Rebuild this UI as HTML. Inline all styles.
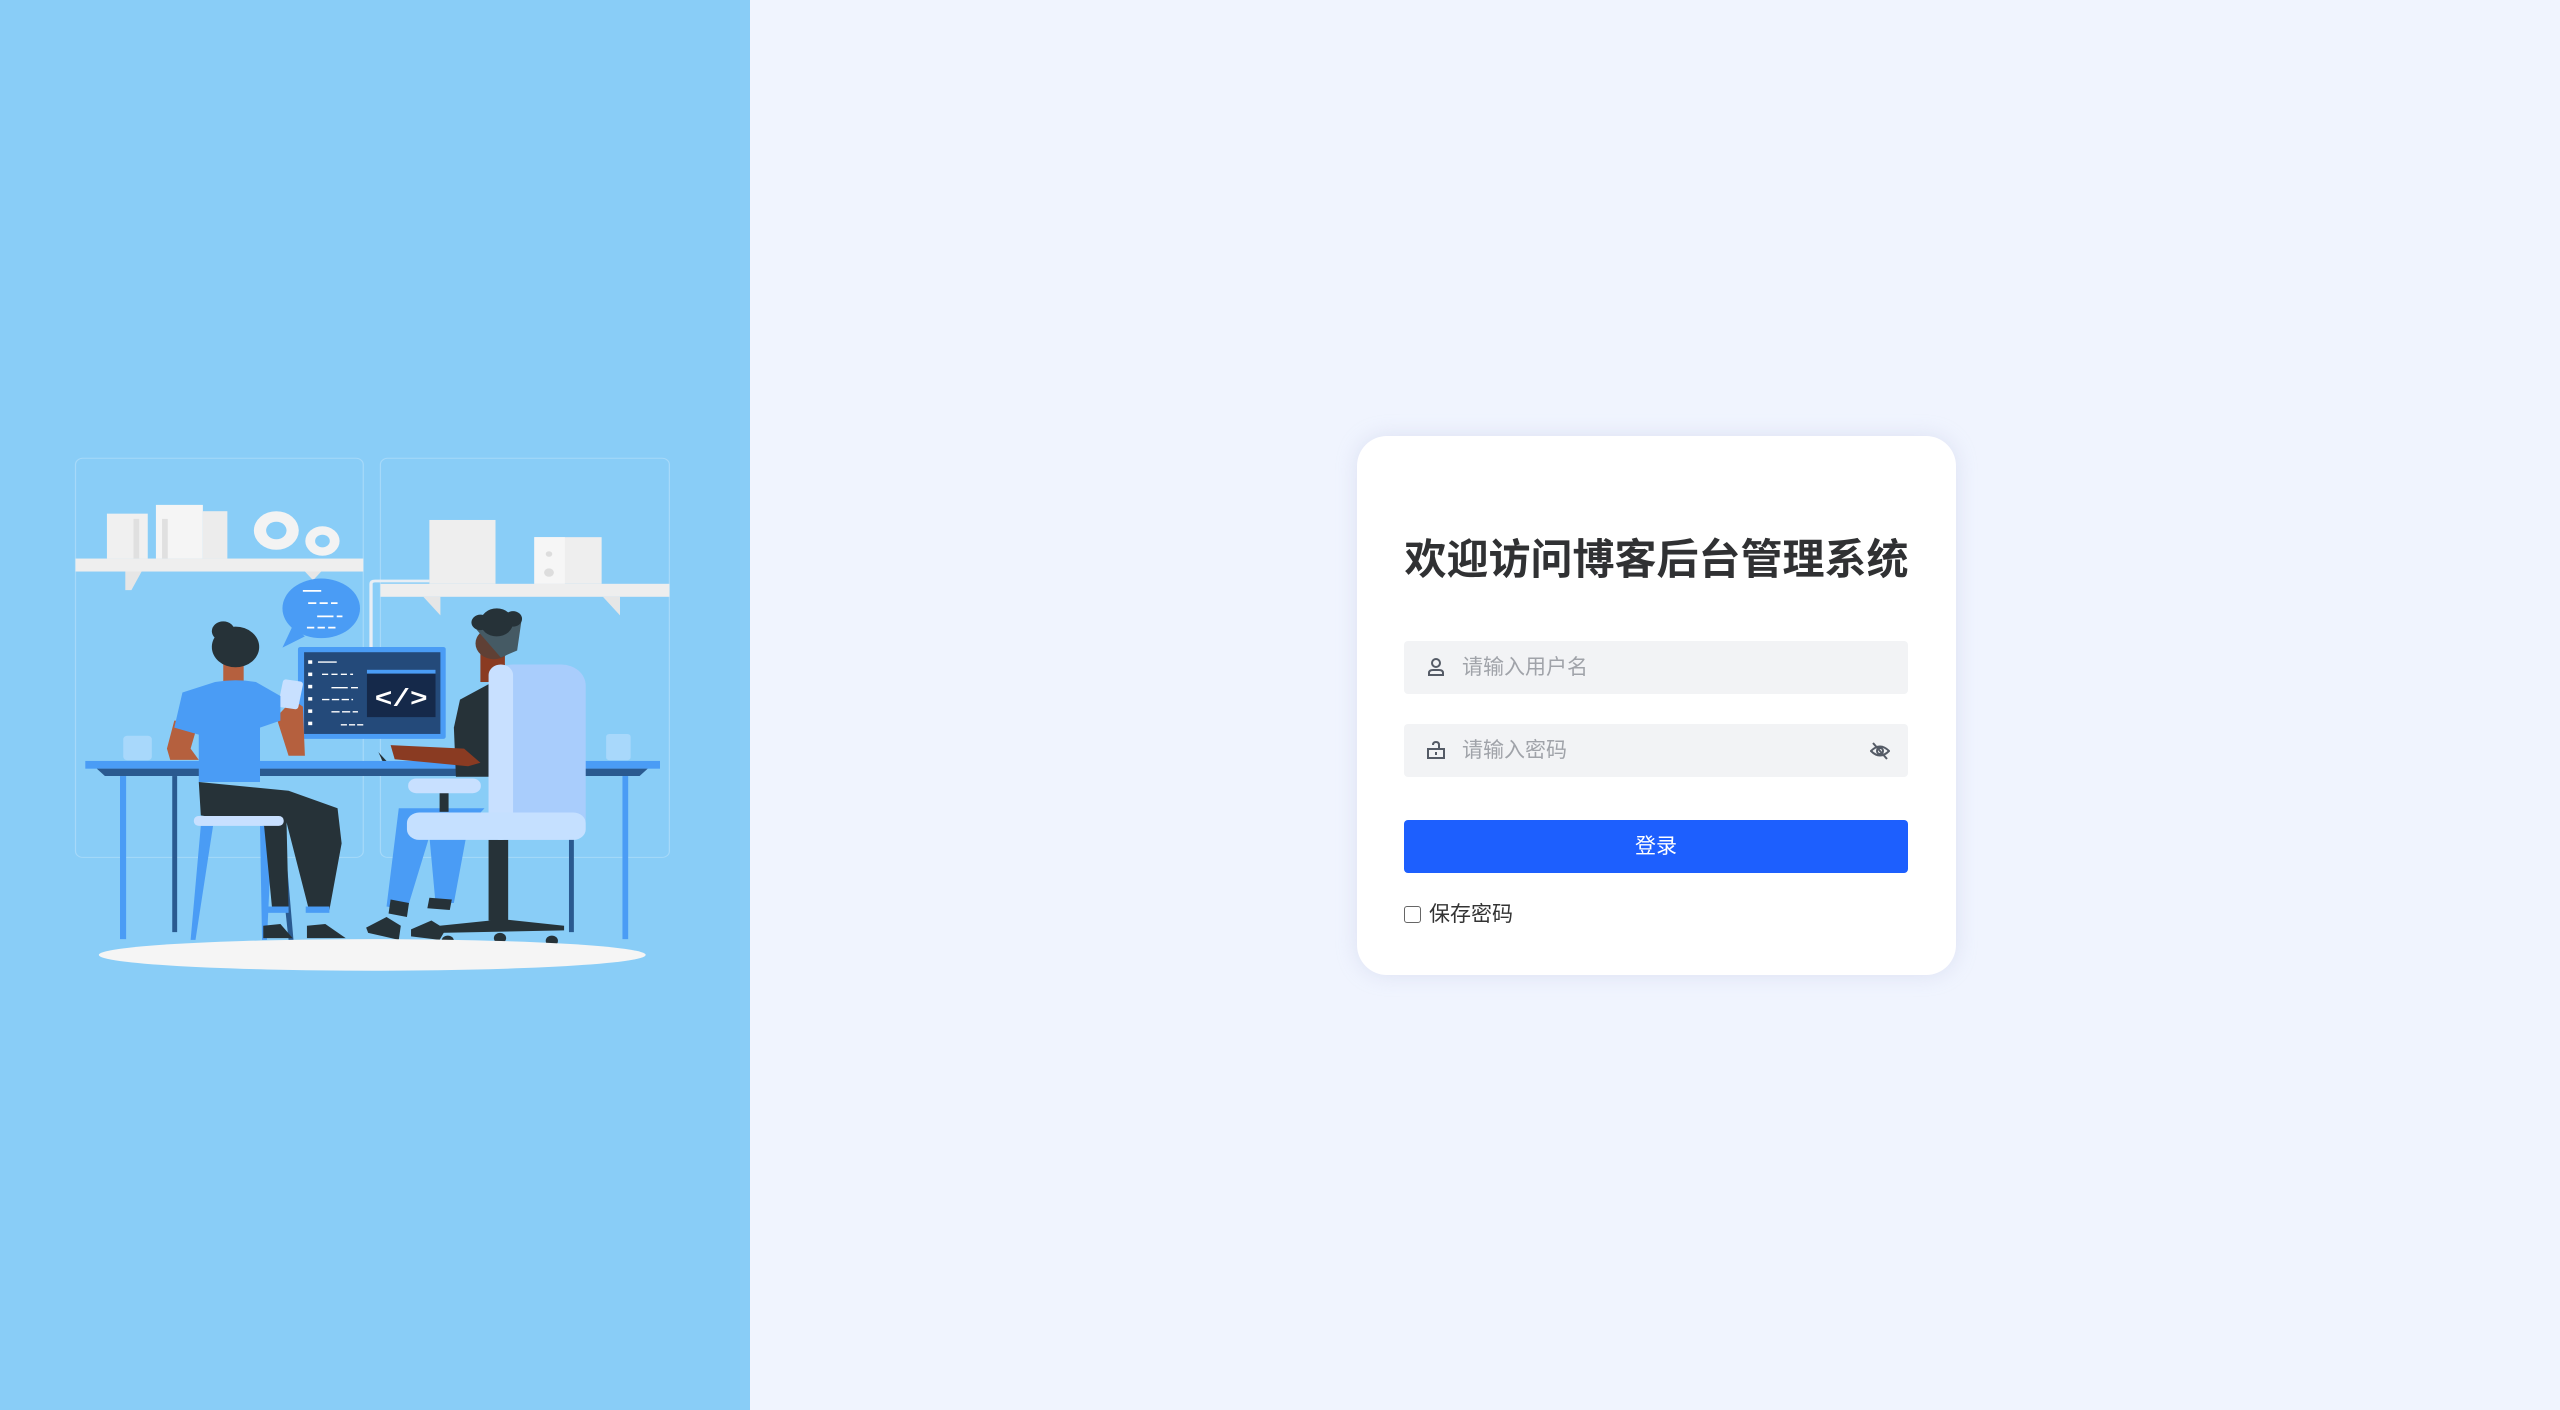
<!DOCTYPE html>
<html><head><meta charset="utf-8"><style>
*{margin:0;padding:0;box-sizing:border-box}
body{width:2560px;height:1410px;background:#f0f4fe;position:relative;overflow:hidden;font-family:"Liberation Sans","Noto Sans CJK SC",sans-serif}
#left{position:absolute;left:0;top:0;width:750px;height:1410px;background:#89cdf7}
#ill{position:absolute;left:60px;top:440px;width:640px;height:550px}
#card{position:absolute;left:1357px;top:436px;width:599px;height:539px;background:#fff;border-radius:30px;box-shadow:0 0 20px rgba(180,190,220,.35)}
h1{position:absolute;top:526px;text-align:center;font-size:42px;font-weight:bold;color:#303133;font-family:"Liberation Sans","Noto Sans CJK SC",sans-serif}
.inp{position:absolute;left:1404px;width:504px;height:53px;background:#f2f3f5;border-radius:4px}
.inp span{position:absolute;left:58px;top:13px;font-size:21px;color:#a0a3a9;line-height:27px}
.inp svg{position:absolute}
#btn{position:absolute;left:1404px;top:820px;width:504px;height:53px;background:#1d5ffe;border-radius:4px;color:#fff;font-size:21px;text-align:center;line-height:53px}
#cb{position:absolute;left:1404px;top:906px;width:17px;height:17px;border:1.5px solid #666;border-radius:3px;background:#fff}
#cbt{position:absolute;left:1429px;top:901px;font-size:21px;color:#333;line-height:27px}
</style></head><body>
<div id="left">
<svg id="ill" viewBox="0 0 1568 1568" preserveAspectRatio="none">
<rect x="38" y="52" width="705" height="1138" rx="18" fill="none" stroke="#a6d9f9" stroke-width="3"/>
<rect x="785" y="52" width="708" height="1138" rx="18" fill="none" stroke="#a6d9f9" stroke-width="3"/>
<rect x="115" y="210" width="100" height="128" fill="#f0f0f0"/>
<rect x="235" y="185" width="115" height="153" fill="#f5f5f5"/>
<rect x="350" y="203" width="60" height="135" fill="#ececec"/>
<rect x="180" y="225" width="14" height="113" fill="#e0e0e0"/>
<rect x="250" y="225" width="14" height="113" fill="#e0e0e0"/>
<circle cx="530" cy="258" r="55" fill="#f3f3f3"/><circle cx="530" cy="258" r="25" fill="#89cdf7"/>
<circle cx="643" cy="288" r="42" fill="#f3f3f3"/><circle cx="643" cy="288" r="18" fill="#89cdf7"/>
<rect x="38" y="338" width="705" height="37" fill="#eeeeee"/>
<polygon points="160,375 200,375 175,428 160,428" fill="#e6e6e6"/>
<polygon points="600,375 640,375 620,400" fill="#e6e6e6"/>
<path d="M762 590 V410 Q762 402 772 402 H905" fill="none" stroke="#e8eef5" stroke-width="8"/>
<rect x="905" y="228" width="162" height="182" fill="#eeeeee"/>
<rect x="1162" y="277" width="165" height="133" fill="#eeeeee"/>
<rect x="1162" y="277" width="75" height="133" fill="#f6f6f6"/>
<circle cx="1198" cy="325" r="8" fill="#ddd"/><circle cx="1198" cy="378" r="12" fill="#ddd"/>
<rect x="785" y="410" width="708" height="37" fill="#eeeeee"/>
<polygon points="890,447 932,447 932,500" fill="#e6e6e6"/>
<polygon points="1330,447 1372,447 1372,500" fill="#e6e6e6"/>
<ellipse cx="640" cy="480" rx="95" ry="85" fill="#4a9cf5"/>
<polygon points="570,530 600,560 545,592" fill="#4a9cf5"/>
<g stroke="#fff" stroke-width="5"><line x1="595" y1="430" x2="640" y2="430"/><line x1="608" y1="465" x2="680" y2="465" stroke-dasharray="20 8"/><line x1="630" y1="503" x2="692" y2="503" stroke-dasharray="40 8"/><line x1="605" y1="535" x2="680" y2="535" stroke-dasharray="18 8"/></g>
<rect x="155" y="843" width="70" height="70" rx="10" fill="#a8d8fb"/>
<rect x="1338" y="838" width="60" height="75" rx="8" fill="#a8d8fb"/>
<rect x="583" y="590" width="362" height="262" rx="6" fill="#4a9cf5"/>
<rect x="598" y="605" width="334" height="233" fill="#244a7a"/>
<rect x="752" y="655" width="168" height="135" fill="#15294a"/>
<rect x="752" y="655" width="168" height="11" fill="#4a9cf5"/>
<text x="836" y="758" font-family="Liberation Mono,monospace" font-size="72" fill="#fff" text-anchor="middle" font-weight="bold">&lt;/&gt;</text>
<g fill="#fff"><rect x="608" y="628" width="10" height="10"/><rect x="608" y="663" width="10" height="10"/><rect x="608" y="698" width="10" height="10"/><rect x="608" y="733" width="10" height="10"/><rect x="608" y="768" width="10" height="10"/><rect x="608" y="803" width="10" height="10"/></g>
<g stroke="#fff" stroke-width="4"><line x1="632" y1="633" x2="678" y2="633"/><line x1="642" y1="668" x2="718" y2="668" stroke-dasharray="15 8"/><line x1="665" y1="706" x2="730" y2="706" stroke-dasharray="40 8"/><line x1="642" y1="740" x2="718" y2="740" stroke-dasharray="18 6"/><line x1="665" y1="775" x2="730" y2="775" stroke-dasharray="20 6"/><line x1="688" y1="812" x2="746" y2="812" stroke-dasharray="15 5"/></g>
<polygon points="780,890 800,915 790,915" fill="#263238"/>
<rect x="62" y="915" width="1408" height="22" fill="#4a9cf5"/>
<polygon points="90,937 1440,937 1420,958 110,958" fill="#2a5a90"/>
<rect x="147" y="958" width="15" height="465" fill="#4a9cf5"/>
<rect x="275" y="958" width="12" height="445" fill="#2a5a90"/>
<rect x="1378" y="958" width="14" height="465" fill="#4a9cf5"/>
<rect x="1247" y="958" width="12" height="445" fill="#2a5a90"/>
<polygon points="345,1100 320,1425 332,1425 375,1100" fill="#4a9cf5"/>
<polygon points="490,1100 495,1425 507,1425 520,1100" fill="#4a9cf5"/>
<polygon points="530,1100 560,1425 572,1425 548,1100" fill="#2a5a90"/>
<path d="M340 975 L345 1070 L500 1100 L520 1340 L560 1340 L555 1090 L610 1340 L660 1340 L690 1150 L680 1050 L560 1000 Z" fill="#263238"/>
<rect x="328" y="1072" width="220" height="28" rx="12" fill="#c8e0ff"/>
<rect x="500" y="1330" width="60" height="18" fill="#4a9cf5"/><rect x="602" y="1330" width="58" height="18" fill="#4a9cf5"/>
<path d="M498 1385 L540 1380 L570 1420 L498 1420Z" fill="#263238"/>
<path d="M605 1385 L650 1380 L700 1420 L605 1420Z" fill="#263238"/>
<path d="M280 800 L262 880 L270 912 L340 912 L320 880 L340 800Z" fill="#b5603e"/>
<path d="M530 790 L560 900 L600 900 L595 760 L570 740Z" fill="#b5603e"/>
<rect x="540" y="685" width="50" height="80" rx="8" fill="#c8e0ff" transform="rotate(10 565 725)"/>
<rect x="400" y="620" width="50" height="80" fill="#b5603e"/>
<path d="M380 690 Q430 680 480 690 L540 730 L540 800 L490 820 L490 975 L340 975 L340 840 L280 820 L300 720Z" fill="#4a9cf5"/>
<circle cx="430" cy="590" r="58" fill="#263238"/>
<circle cx="400" cy="545" r="28" fill="#263238"/>
<path d="M830 1050 L800 1330 L850 1340 L905 1130 L920 1320 L965 1320 L1000 1100 L1040 1050Z" fill="#4a9cf5"/>
<path d="M810 1310 L855 1320 L850 1360 L805 1350Z" fill="#263238"/>
<path d="M905 1305 L960 1310 L955 1340 L900 1335Z" fill="#263238"/>
<path d="M750 1390 L800 1360 L835 1385 L830 1425 L755 1405Z" fill="#263238"/>
<path d="M860 1395 L910 1370 L945 1395 L930 1425 L860 1415Z" fill="#263238"/>
<path d="M980 740 L1060 690 L1060 960 L970 960 L965 820Z" fill="#263238"/>
<path d="M810 870 L990 880 L1030 920 L1000 930 L820 910Z" fill="#8a3b22"/>
<rect x="1030" y="580" width="60" height="110" fill="#8a3b22"/>
<circle cx="1063" cy="580" r="45" fill="#5f4035"/>
<path d="M1020 540 Q1060 470 1130 520 L1120 600 L1080 620 Z" fill="#455a64"/>
<circle cx="1070" cy="520" r="40" fill="#263238"/><circle cx="1030" cy="520" r="22" fill="#263238"/><circle cx="1110" cy="510" r="22" fill="#263238"/>
<rect x="930" y="1000" width="22" height="60" fill="#263238"/>
<rect x="1050" y="1140" width="48" height="230" fill="#263238"/>
<polygon points="930,1385 1070,1368 1100,1368 1235,1385 1235,1398 930,1405" fill="#263238"/>
<circle cx="950" cy="1428" r="15" fill="#263238"/><circle cx="1078" cy="1420" r="15" fill="#263238"/><circle cx="1205" cy="1428" r="15" fill="#263238"/>
<rect x="1050" y="640" width="238" height="500" rx="60" fill="#a9cdfc"/>
<rect x="1050" y="640" width="60" height="500" rx="30" fill="#c8e0ff"/>
<rect x="850" y="1062" width="438" height="78" rx="30" fill="#c5e0ff"/>
<rect x="853" y="965" width="178" height="42" rx="20" fill="#c8e0ff"/>
<ellipse cx="765" cy="1468" rx="670" ry="45" fill="#f5f5f5"/>
</svg>
</div>
<div id="card"></div>
<h1 style="left:1357px;width:599px">欢迎访问博客后台管理系统</h1>
<div class="inp" style="top:641px">
<svg style="left:22px;top:16px" width="20" height="20" viewBox="0 0 20 20" fill="none" stroke="#555b66" stroke-width="2"><circle cx="10" cy="6" r="4"/><path d="M3 18 V16 Q3 13 7 13 H13 Q17 13 17 16 V18 Z"/></svg>
<span>请输入用户名</span></div>
<div class="inp" style="top:724px">
<svg style="left:22px;top:16px" width="20" height="20" viewBox="0 0 20 20" fill="none" stroke="#555b66" stroke-width="2"><rect x="2" y="9" width="16" height="9"/><path d="M13 9 V5 Q13 2 10 2 Q7 2 7 5"/><line x1="10" y1="12" x2="10" y2="15"/></svg>
<span>请输入密码</span>
<svg style="left:466px;top:17px" width="20" height="20" viewBox="0 0 20 20" fill="none" stroke="#555b66" stroke-width="2"><path d="M1 10 Q10 1 19 10 Q10 19 1 10Z"/><circle cx="10" cy="10" r="3"/><line x1="3" y1="2" x2="17" y2="18"/></svg>
</div>
<div id="btn">登录</div>
<div id="cb"></div><div id="cbt">保存密码</div>
</body></html>
